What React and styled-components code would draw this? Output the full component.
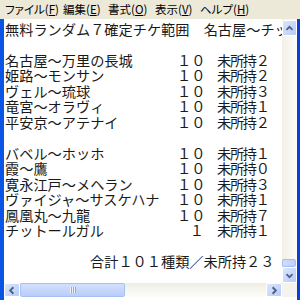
import styled, { createGlobalStyle } from "styled-components";

const Global = createGlobalStyle`
  html, body { margin: 0; padding: 0; background: #fff; }
  body { width: 300px; height: 300px; overflow: hidden; }
`;

const menus = [
  ["ファイル", "F", 58],
  ["編集", "E", 45],
  ["書式", "O", 47],
  ["表示", "V", 45],
  ["ヘルプ", "H", 60],
];

const groupA = [
  ["名古屋～万里の長城", "１０", "未所持２"],
  ["姫路～モンサン", "１０", "未所持２"],
  ["ヴェル～琉球", "１０", "未所持３"],
  ["竜宮～オラヴィ", "１０", "未所持１"],
  ["平安京～アテナイ", "１０", "未所持２"],
];

const groupB = [
  ["バベル～ホッホ", "１０", "未所持１"],
  ["霞～鷹", "１０", "未所持０"],
  ["寛永江戸～メヘラン", "１０", "未所持３"],
  ["ヴァイジャ～サスケハナ", "１０", "未所持１"],
  ["鳳凰丸～九龍", "１０", "未所持７"],
  ["チットールガル", "１", "未所持１"],
];

const Chevron = ({ dir }) => {
  const pts = {
    up: "4,9 7.5,5.5 11,9",
    down: "4,6 7.5,9.5 11,6",
    left: "9,4 5.5,7.5 9,11",
    right: "6,4 9.5,7.5 6,11",
  }[dir];
  return (
    <svg width="15" height="15" viewBox="0 0 15 15">
      <polyline points={pts} fill="none" stroke="#4d6185" strokeWidth="2" />
    </svg>
  );
};

const Entry = ({ row }) => (
  <Row>
    <Name>{row[0]}</Name>
    <Count>{row[1]}</Count>
    <Status>{row[2]}</Status>
  </Row>
);

const App = () => {
  return (
    <Window>
      <Global />
      <MenuBar>
        {menus.map(([label, key, w]) => (
          <MenuItem key={key} w={w}>
            {label}(<u>{key}</u>)
          </MenuItem>
        ))}
      </MenuBar>
      <Frame>
        <Editor>
          <Line>無料ランダム７確定チケ範囲　名古屋～チットールガル　１０</Line>
          <Line />
          {groupA.map((r) => (
            <Entry key={r[0]} row={r} />
          ))}
          <Line />
          {groupB.map((r) => (
            <Entry key={r[0]} row={r} />
          ))}
          <Line />
          <Line indent={85}>合計１０１種類／未所持２３</Line>
        </Editor>
        <VBar>
          <ArrowBtn>
            <Chevron dir="up" />
          </ArrowBtn>
          <VTrack>
            <VThumb />
          </VTrack>
          <ArrowBtn>
            <Chevron dir="down" />
          </ArrowBtn>
        </VBar>
        <HBar>
          <ArrowBtn wide>
            <Chevron dir="left" />
          </ArrowBtn>
          <HThumb>
            <Grip />
          </HThumb>
          <HTrack />
          <ArrowBtn wide>
            <Chevron dir="right" />
          </ArrowBtn>
        </HBar>
        <Corner />
      </Frame>
    </Window>
  );
};

const Window = styled.div`
  width: 300px;
  height: 300px;
  display: flex;
  flex-direction: column;
  overflow: hidden;
  background: #fff;
`;

const MenuBar = styled.div`
  height: 19px;
  flex: none;
  display: flex;
  align-items: center;
  padding-left: 5px;
  background: #ece9d8;
  font-family: "Noto Sans CJK JP", sans-serif;
  font-size: 11.5px;
  font-feature-settings: "palt";
  color: #000;
`;

const MenuItem = styled.span`
  width: ${(p) => p.w}px;
  flex: none;
  line-height: 19px;
  white-space: nowrap;
  u {
    text-decoration: underline;
    text-underline-offset: 1px;
  }
`;

const Frame = styled.div`
  flex: 1;
  display: grid;
  grid-template-columns: 1fr 15px;
  grid-template-rows: 1fr 14px;
  border-left: 4px solid #0a55e6;
  border-right: 3px solid #0a3ed4;
  padding-bottom: 3px;
  min-height: 0;
`;

const Editor = styled.div`
  overflow: hidden;
  padding: 3px 0 0 1px;
  font-family: "Noto Sans CJK JP", sans-serif;
  font-size: 14.2px;
  line-height: 15.47px;
  color: #1a1a1a;
  white-space: pre;
`;

const Line = styled.div`
  height: 15.47px;
  padding-left: ${(p) => p.indent || 0}px;
`;

const Row = styled.div`
  height: 15.47px;
  display: grid;
  grid-template-columns: 172px 27px 1fr;
`;

const Name = styled.span``;

const Count = styled.span`
  text-align: right;
`;

const Status = styled.span`
  padding-left: 13px;
  letter-spacing: -1.3px;
`;

const VBar = styled.div`
  display: flex;
  flex-direction: column;
  padding-top: 1px;
  background: linear-gradient(to right, #f1efe6, #fdfdf9);
`;

const ArrowBtn = styled.div`
  flex: none;
  width: ${(p) => (p.wide ? "16px" : "15px")};
  height: ${(p) => (p.wide ? "14px" : "16px")};
  box-sizing: border-box;
  display: flex;
  align-items: center;
  justify-content: center;
  border: 1px solid #fff;
  border-radius: 2px;
  background: linear-gradient(135deg, #dbe6fd, #b7cbf9);
  svg {
    display: block;
  }
`;

const VTrack = styled.div`
  flex: 1;
  display: flex;
  flex-direction: column;
  justify-content: flex-end;
`;

const VThumb = styled.div`
  height: 8px;
  margin: 0 1px 0 0;
  box-sizing: border-box;
  border: 1px solid #a3bcf2;
  border-radius: 2px;
  background: linear-gradient(to right, #cfdcfd, #bcd0fa);
`;

const HBar = styled.div`
  display: flex;
  background: linear-gradient(to bottom, #efede4, #fdfdf9);
`;

const HThumb = styled.div`
  width: 105px;
  flex: none;
  box-sizing: border-box;
  border: 1px solid #a8bff5;
  border-radius: 2px;
  background: linear-gradient(to bottom, #d3e0fd, #b9cdf9);
  display: flex;
  align-items: center;
  justify-content: center;
`;

const Grip = styled.div`
  width: 6px;
  height: 6px;
  background: repeating-linear-gradient(
    to right,
    #eef3fe 0 1px,
    #8ea7e0 1px 2px
  );
`;

const HTrack = styled.div`
  flex: 1;
`;

const Corner = styled.div`
  background: #f4f3ee;
`;

export default App;
